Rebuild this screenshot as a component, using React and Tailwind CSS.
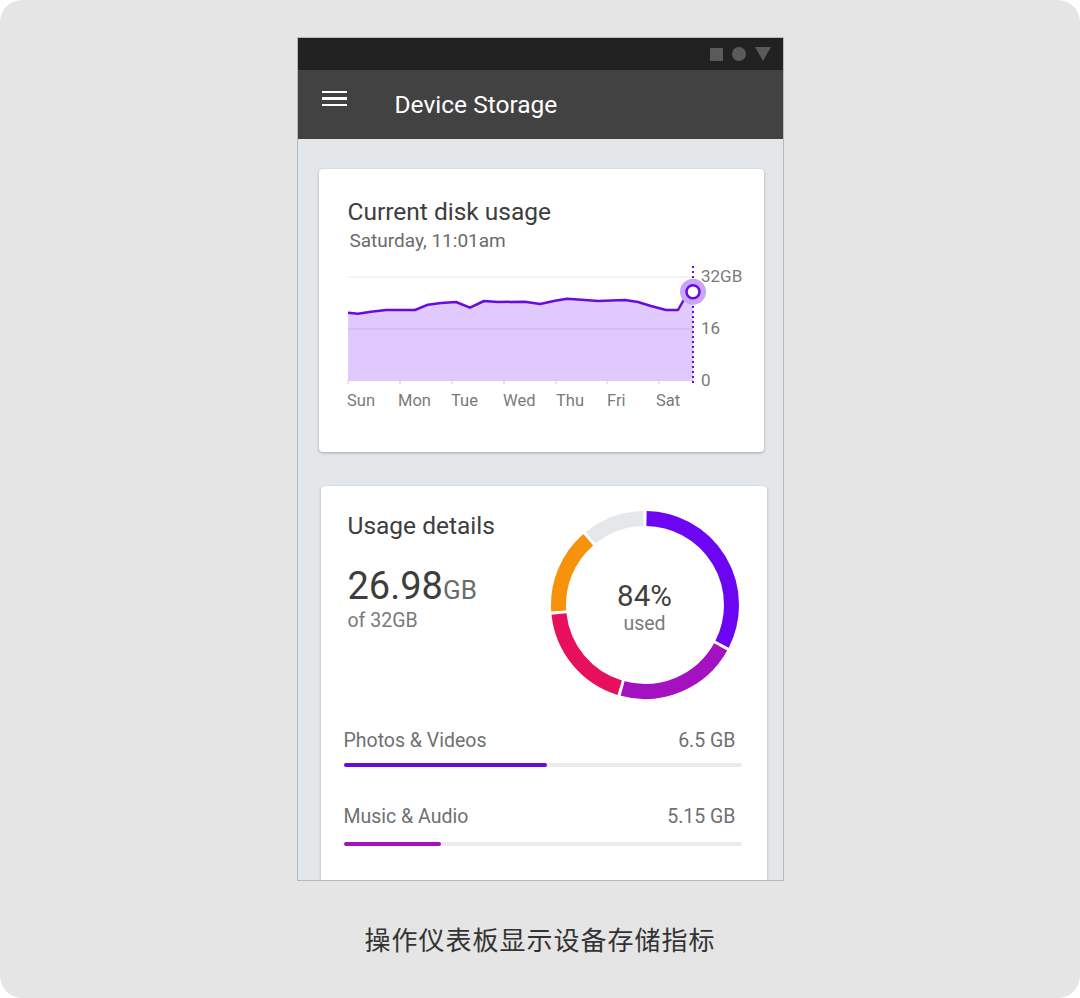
const font = { fontFamily: "Roboto, 'Noto Sans CJK SC', sans-serif" };

const linePts = [
  [8, 51.7], [18, 52.7], [31, 50.7], [46, 49], [75, 49], [88, 43.7], [101, 42], [116, 41],
  [130, 46.7], [144, 40], [158, 41], [185, 40.7], [200, 43], [215, 39.7], [227, 37.7],
  [245, 39], [258, 40], [285, 39], [298, 41], [311, 45], [326, 49], [338, 49], [346, 35], [353, 30.7],
];

const days = [
  ["Sun", 7], ["Mon", 58], ["Tue", 111], ["Wed", 163], ["Thu", 216], ["Fri", 267], ["Sat", 316],
];

function UsageChart() {
  const line = linePts.map((p, i) => (i ? "L" : "M") + p[0] + " " + p[1]).join(" ");
  const area = line + " L353 119 L8 119 Z";
  return (
    <svg width="410" height="150" viewBox="0 0 410 150" className="block">
      <line x1="8" y1="16" x2="353" y2="16" stroke="#e6e6e6" strokeWidth="1" />
      <path d={area} fill="#e0c9fd" />
      <line x1="8" y1="68" x2="353" y2="68" stroke="#cbb2ef" strokeWidth="1" />
      <line x1="8" y1="119.5" x2="353" y2="119.5" stroke="#d6d6d6" strokeWidth="1" />
      {[8, 60, 112, 164, 216, 267, 319].map((x) => (
        <line key={x} x1={x} y1="119" x2={x} y2="123" stroke="#cfcfcf" strokeWidth="1" />
      ))}
      <path d={line} fill="none" stroke="#6a0ae0" strokeWidth="2.5" strokeLinejoin="round" />
      <line x1="353" y1="5" x2="353" y2="125" stroke="#6a0ae0" strokeWidth="2" strokeDasharray="2 3" />
      <circle cx="353" cy="30.7" r="13" fill="#c9a6f6" />
      <circle cx="353" cy="30.7" r="6.5" fill="#fff" stroke="#6a0ae0" strokeWidth="2.5" />
      {days.map(([d, x]) => (
        <text key={d} x={x} y="145" fontSize="16.5" fill="#7a7a7a" style={font}>{d}</text>
      ))}
      <text x="361" y="21" fontSize="17" fill="#7a7a7a" style={font}>32GB</text>
      <text x="361" y="73" fontSize="17" fill="#7a7a7a" style={font}>16</text>
      <text x="361" y="125" fontSize="17" fill="#7a7a7a" style={font}>0</text>
    </svg>
  );
}

const segs = [
  [1, 117, "#6c05f2"],
  [119, 195, "#a411c0"],
  [197, 264, "#e80f5c"],
  [266, 319, "#f7920d"],
  [321, 359, "#e5e8eb"],
];

function arc(a0, a1, r) {
  const rad = (a) => ((a - 90) * Math.PI) / 180;
  const x0 = 95 + r * Math.cos(rad(a0));
  const y0 = 95 + r * Math.sin(rad(a0));
  const x1 = 95 + r * Math.cos(rad(a1));
  const y1 = 95 + r * Math.sin(rad(a1));
  const large = a1 - a0 > 180 ? 1 : 0;
  return `M${x0} ${y0} A${r} ${r} 0 ${large} 1 ${x1} ${y1}`;
}

function Donut() {
  return (
    <div className="relative w-[190px] h-[190px]">
      <svg width="190" height="190" viewBox="0 0 190 190" className="block">
        {segs.map(([a, b, c]) => (
          <path key={c} d={arc(a, b, 86.5)} fill="none" stroke={c} strokeWidth="15" />
        ))}
      </svg>
      <div className="absolute inset-0 flex flex-col items-center justify-center pt-[4px]">
        <div className="text-[29.5px] leading-[34px] text-[#3f3f3f]">84%</div>
        <div className="text-[19.5px] leading-[22px] text-[#7a7a7a]">used</div>
      </div>
    </div>
  );
}

function Bar({ label, value, fill, color, mt, gap }) {
  return (
    <div className={mt}>
      <div className="flex justify-between pr-[6px] text-[19.5px] leading-[24px] text-[#707070]">
        <span>{label}</span>
        <span>{value}</span>
      </div>
      <div className={"h-[4px] rounded-full bg-[#ebebeb] " + gap}>
        <div className="h-[4px] rounded-full" style={{ width: fill, background: color }} />
      </div>
    </div>
  );
}

export default function App() {
  return (
    <div className="w-[1080px] h-[998px] bg-white" style={font}>
      <div className="w-[1080px] h-[998px] rounded-[22px] bg-[#e5e5e5] flex flex-col items-center pt-[37px]">
        <div className="w-[487px] h-[844px] border border-[#b9b9b9] bg-[#e3e7ea] flex flex-col overflow-hidden">
          <div className="h-[32px] shrink-0 bg-[#212121] flex items-center justify-end gap-[9px] pr-[12px]">
            <div className="w-[13px] h-[13px] bg-[#5a5a5a]" />
            <div className="w-[14px] h-[14px] rounded-full bg-[#5a5a5a]" />
            <svg width="16" height="14" viewBox="0 0 16 14">
              <path d="M0 0 H16 L8 14 Z" fill="#5a5a5a" />
            </svg>
          </div>
          <div className="h-[69px] shrink-0 bg-[#424242] flex items-center">
            <div className="ml-[24px] w-[25px] flex flex-col gap-[4px] -mt-[12px]">
              <div className="h-[2.5px] bg-white" />
              <div className="h-[2.5px] bg-white" />
              <div className="h-[2.5px] bg-white" />
            </div>
            <div className="ml-[48px] text-[24.5px] text-white mt-[2px]">Device Storage</div>
          </div>
          <div className="flex-1 min-h-0 pt-[30px] pl-[21px] pr-[19px]">
            <div className="h-[283px] bg-white rounded-[4px] shadow-[0_1px_3px_rgba(0,0,0,0.28)] pt-[29px]">
              <div className="pl-[29px] text-[24.5px] leading-[28px] text-[#3d3d3d]">Current disk usage</div>
              <div className="pl-[31px] mt-[4px] text-[19px] leading-[22px] text-[#6b6b6b]">Saturday, 11:01am</div>
              <div className="mt-[9px] pl-[21px]">
                <UsageChart />
              </div>
            </div>
            <div className="mt-[34px] ml-[2px] -mr-[3px] h-[420px] bg-white rounded-[4px] shadow-[0_1px_3px_rgba(0,0,0,0.28)] pt-[24px] pl-[23px] pr-[25px]">
              <div className="flex">
                <div className="pl-[4px] pt-[2px]">
                  <div className="text-[24.5px] leading-[28px] text-[#3d3d3d]">Usage details</div>
                  <div className="mt-[24px] h-[44px] flex items-baseline text-[#3d3d3d]">
                    <span className="text-[38px] leading-[44px]">26.98</span>
                    <span className="text-[26px] leading-[44px] text-[#6b6b6b]">GB</span>
                  </div>
                  <div className="mt-[1px] text-[19.5px] leading-[24px] text-[#7a7a7a]">of 32GB</div>
                </div>
                <div className="ml-auto mr-[2px]">
                  <Donut />
                </div>
              </div>
              <Bar label="Photos & Videos" value="6.5 GB" fill="203px" color="#6a0ad9" mt="mt-[29px]" gap="mt-[10px]" />
              <Bar label="Music & Audio" value="5.15 GB" fill="97px" color="#a413b8" mt="mt-[38px]" gap="mt-[13px]" />
            </div>
          </div>
        </div>
        <div className="mt-[43px] text-[26px] leading-[34px] text-[#333333] tracking-[1px]">
          操作仪表板显示设备存储指标
        </div>
      </div>
    </div>
  );
}
